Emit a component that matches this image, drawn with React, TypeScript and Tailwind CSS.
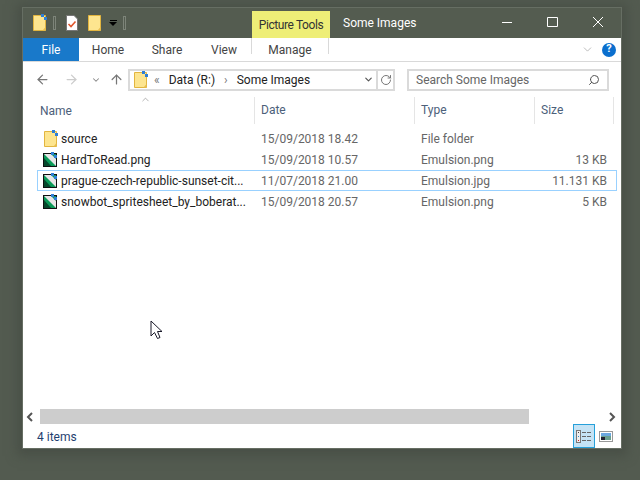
import { ChevronDown, ChevronUp, Search, RotateCw, ArrowLeft, ArrowRight, ArrowUp } from "lucide-react";

const font = { fontFamily: 'Roboto, sans-serif' };

function Folder({ dots }: { dots?: boolean }) {
  return (
    <svg width="16" height="18" viewBox="0 0 16 18" className="shrink-0">
      <path d="M1.5 1.5 H13.5 V16.5 H1.5 Z" fill="#fde58f" stroke="#e2b53f" />
      <path d="M10.5 16.5 L13.5 13 V16.5 Z" fill="#e8bf50" />
      {dots && <rect x="9" y="0" width="3" height="3" fill="#2f7fd6" />}
      {dots && <rect x="12" y="3" width="3" height="3" fill="#2f7fd6" />}
    </svg>
  );
}

function ImageFile() {
  return (
    <svg width="16" height="16" viewBox="0 0 16 16" className="shrink-0">
      <rect x="0.5" y="1.5" width="13" height="13" fill="#0b9a58" stroke="#111" />
      <path d="M1 2 H8 L13 7 V14 Z" fill="#e6e6e6" />
      <path d="M1 6 L8 14 H1 Z" fill="#06482c" />
      <rect x="8" y="0" width="3" height="3" fill="#2f7fd6" />
      <rect x="11" y="3" width="3" height="3" fill="#2f7fd6" />
    </svg>
  );
}

function CheckDoc() {
  return (
    <svg width="14" height="18" viewBox="0 0 14 18" className="shrink-0">
      <path d="M1.5 1.5 H9 L12.5 5 V16.5 H1.5 Z" fill="#fff" stroke="#777" />
      <path d="M3.5 10 L6 12.5 L10.5 7.5" fill="none" stroke="#e0562c" strokeWidth="1.6" />
    </svg>
  );
}

function Divider() {
  return <div className="h-[14px] w-[3px] shrink-0 border border-[#7d8479]" />;
}

function Pointer() {
  return (
    <svg width="14" height="20" viewBox="0 0 14 20" className="absolute left-[150px] top-[320px]">
      <path d="M1 1 V16 L4.5 12.5 L7.5 18.5 L10 17.5 L7.5 11.5 L12 11.5 Z" fill="#fff" stroke="#1a1a2a" />
    </svg>
  );
}

const files = [
  { name: "source", date: "15/09/2018 18.42", type: "File folder", size: "", folder: true },
  { name: "HardToRead.png", date: "15/09/2018 10.57", type: "Emulsion.png", size: "13 KB" },
  { name: "prague-czech-republic-sunset-cit...", date: "11/07/2018 21.00", type: "Emulsion.jpg", size: "11.131 KB", selected: true },
  { name: "snowbot_spritesheet_by_boberat...", date: "15/09/2018 20.57", type: "Emulsion.png", size: "5 KB" },
];

export default function App() {
  return (
    <div className="relative h-[480px] w-[640px] overflow-hidden bg-[#535b50] pl-[22px] pt-[7px] text-[12px]" style={font}>
      <div className="flex h-[442px] w-[600px] flex-col border border-[#666e63] bg-white shadow-[0_2px_10px_5px_#495047]">
        {/* title bar */}
        <div className="flex h-[30px] shrink-0 items-end bg-[#545c50] pl-[9px] text-white">
          <div className="flex h-[30px] w-[220px] items-center">
            <Folder dots />
            <div className="ml-[5px]"><Divider /></div>
            <div className="ml-[9px]"><CheckDoc /></div>
            <div className="ml-[8px]"><Folder /></div>
            <div className="ml-[6px] flex flex-col items-center">
              <div className="mb-[1px] h-[1px] w-[7px] bg-black" />
              <div className="h-0 w-0 border-x-[4px] border-t-[4px] border-x-transparent border-t-black" />
            </div>
            <div className="ml-[6px]"><Divider /></div>
          </div>
          <div className="flex h-[27px] w-[78px] items-center justify-center bg-[#eeee77] tracking-[-0.4px] text-[#333]">Picture Tools</div>
          <div className="ml-[13px] flex h-[30px] w-[159px] items-center">Some Images</div>
          <svg width="101" height="12" viewBox="0 0 101 12" className="mb-[10px] shrink-0">
            <path d="M0 6.5 H10 M45.5 1.5 H55.5 V10.5 H45.5 Z M91 1 L101 11 M101 1 L91 11" fill="none" stroke="#fff" />
          </svg>
        </div>
        {/* ribbon tabs */}
        <div className="flex h-[24px] shrink-0 items-stretch border-b border-[#d9d9d9] text-[#444]">
          <div className="flex w-[56px] items-center justify-center bg-[#1979ca] text-white">File</div>
          <div className="flex w-[58px] items-center justify-center">Home</div>
          <div className="flex w-[60px] items-center justify-center">Share</div>
          <div className="flex w-[54px] items-center justify-center">View</div>
          <div className="mb-[7px] flex w-[78px] items-center justify-center border-x border-[#d9d9d9] pt-[7px]">Manage</div>
          <div className="flex flex-1 items-center justify-end pr-[5px]">
            <ChevronDown size={13} className="mr-[8px] text-[#999]" strokeWidth={1.2} />
            <div className="flex h-[14px] w-[14px] items-center justify-center rounded-full bg-[#0b6fce] text-[11px] font-bold text-white">?</div>
          </div>
        </div>
        {/* address bar */}
        <div className="flex h-[35px] shrink-0 items-center">
          <ArrowLeft size={15} className="ml-[12px] text-[#777]" strokeWidth={2} />
          <ArrowRight size={15} className="ml-[14px] text-[#ccc]" strokeWidth={2} />
          <ChevronDown size={10} className="ml-[12px] text-[#888]" strokeWidth={2.5} />
          <ArrowUp size={15} className="ml-[8px] text-[#777]" strokeWidth={2} />
          <div className="ml-[4px] flex h-[22px] w-[267px] items-center border-2 border-[#dadada] pl-[3px] text-[#222]">
            <Folder dots />
            <span className="ml-[5px] text-[#777]">«</span>
            <span className="ml-[9px]">Data (R:)</span>
            <span className="ml-[9px] text-[#777]">›</span>
            <span className="ml-[9px]">Some Images</span>
            <ChevronDown size={11} className="ml-auto mr-[2px] text-[#555]" strokeWidth={2.5} />
            <div className="flex h-full w-[17px] items-center justify-center border-l-2 border-[#dadada]">
              <RotateCw size={12} className="text-[#777]" strokeWidth={2} />
            </div>
          </div>
          <div className="ml-[12px] flex h-[22px] w-[202px] items-center justify-between border-2 border-[#dadada] pl-[7px] pr-[7px] text-[#666]">
            <span>Search Some Images</span>
            <Search size={12} className="-scale-x-100 text-[#555]" strokeWidth={2} />
          </div>
        </div>
        {/* column headers */}
        <div className="relative grid h-[25px] shrink-0 grid-cols-[231px_160px_120px_80px] items-center text-[#4c607a]">
          <ChevronUp size={11} className="absolute left-[117px] top-[-3px] text-[#777]" strokeWidth={1.2} />
          <div className="pl-[17px]">Name</div>
          <div className="h-full border-l border-[#e5e5e5] pl-[6px] leading-[27px]">Date</div>
          <div className="h-full border-l border-[#e5e5e5] pl-[6px] leading-[27px]">Type</div>
          <div className="h-full border-l border-r border-[#e5e5e5] pl-[6px] leading-[27px]">Size</div>
        </div>
        {/* file list */}
        <div className="flex-1 pl-[14px] pr-[4px] pt-[6px] text-[#222]">
          {files.map((f) => (
            <div
              key={f.name}
              className={`grid h-[21px] grid-cols-[218px_160px_120px_66px] items-center pl-[5px] ${f.selected ? "border border-[#99d1ff]" : "border border-transparent"}`}
            >
              <div className="flex items-center gap-[2px] overflow-hidden whitespace-nowrap">
                {f.folder ? <Folder dots /> : <ImageFile />}
                <span>{f.name}</span>
              </div>
              <div className="text-[#666]">{f.date}</div>
              <div className="text-[#666]">{f.type}</div>
              <div className="text-right text-[#666]">{f.size}</div>
            </div>
          ))}
        </div>
        {/* horizontal scrollbar */}
        <div className="flex h-[15px] shrink-0 items-center">
          <svg width="17" height="10" viewBox="0 0 17 10" className="text-[#555]">
            <path d="M9 1 L5 5 L9 9" fill="none" stroke="currentColor" strokeWidth="2" />
          </svg>
          <div className="h-[15px] w-[489px] bg-[#cdcdcd]" />
          <svg width="10" height="10" viewBox="0 0 10 10" className="ml-auto mr-[4px] text-[#555]">
            <path d="M3 1 L7 5 L3 9" fill="none" stroke="currentColor" strokeWidth="2" />
          </svg>
        </div>
        {/* status bar */}
        <div className="flex h-[24px] shrink-0 items-center text-[#1f3f70]">
          <span className="ml-[14px] pt-[2px]">4 items</span>
          <div className="ml-auto flex h-[24px] w-[22px] items-center justify-center border border-[#26a0da] bg-[#c5e3f5]">
            <svg width="16" height="13" viewBox="0 0 16 13">
              <rect x="0.5" y="0.5" width="4" height="12" fill="#eee" stroke="#777" />
              <path d="M2 2.5 H3" stroke="#444" />
              <path d="M2 6.5 H3" stroke="#2a8fd0" />
              <path d="M2 10.5 H3" stroke="#d02020" />
              <path d="M6 2.5 H10 M11 2.5 H15 M6 6.5 H10 M11 6.5 H15 M6 10.5 H10 M11 10.5 H15" stroke="#666" />
            </svg>
          </div>
          <svg width="14" height="11" viewBox="0 0 14 11" className="ml-[4px] mr-[8px]">
            <rect x="0.5" y="0.5" width="13" height="10" fill="#fff" stroke="#999" />
            <rect x="2" y="2" width="10" height="3" fill="#6aa7e0" />
            <rect x="2" y="5" width="10" height="4" fill="#6aa090" />
            <rect x="2" y="6" width="4" height="3" fill="#223" />
          </svg>
        </div>
      </div>
      <Pointer />
    </div>
  );
}
